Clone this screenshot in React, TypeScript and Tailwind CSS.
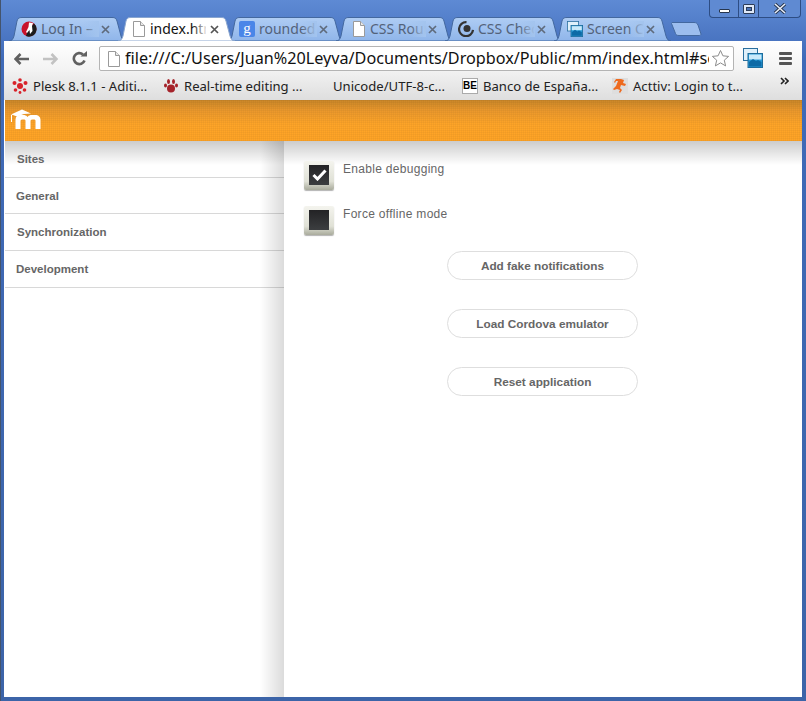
import type { ReactNode } from "react";

const PageIcon = () => (
  <svg width="14" height="16" viewBox="0 0 14 16" className="shrink-0">
    <path d="M1.500.5h7l4 4v11h-11z" fill="#fff" stroke="#9a9a9a" />
    <path d="M8.500.5v4h4" fill="#e8e8e8" stroke="#9a9a9a" />
  </svg>
);

const ArcherIcon = () => (
  <svg width="16" height="16" viewBox="0 0 16 16" className="shrink-0">
    <circle cx="8" cy="8" r="7.500" fill="#c8122c" />
    <path d="M13 2.500A7.500 7.500 0 0 1 5 15L7 9z" fill="#1d1d1d" />
    <path d="M8 1.500l4 .5-1 3 .5 5-2.500 3-.5-4-2.500 3-1-1 2.500-5z" fill="#fff" />
  </svg>
);

const GoogleIcon = () => (
  <div className="w-4 h-4 shrink-0 rounded-[2px] bg-[#4a86e8] flex items-center justify-center text-white text-[15px] leading-none pb-[2px] font-['Liberation_Serif',serif]">
    g
  </div>
);

const RingIcon = () => (
  <svg width="16" height="16" viewBox="0 0 16 16" className="shrink-0">
    <path d="M8.500 1.200A7 7 0 1 0 15 9" fill="none" stroke="#333" strokeWidth="2.200" />
    <circle cx="9" cy="7.500" r="3.500" fill="#333" />
  </svg>
);

const CaptureIcon = ({ size = 16 }: { size?: number }) => (
  <svg width={size} height={size} viewBox="0 0 20 20" className="shrink-0">
    <rect x=".5" y=".5" width="14" height="12" fill="#dff0fa" stroke="#2a6f9e" />
    <rect x="5" y="5.500" width="14.500" height="14" fill="#2a9ad6" stroke="#1c6c9c" />
    <rect x="6" y="6.500" width="12.500" height="5" fill="#c9e9f9" />
    <path d="M6 14l4-3 3 2 2-1 3.500 2v4.500H6z" fill="#0d6aa6" />
  </svg>
);

const tabs: { title: string; icon: ReactNode; active?: boolean; ml: string }[] = [
  { title: "Log In – Moodle", icon: <ArcherIcon />, ml: "pl-[12px]" },
  { title: "index.html", icon: <PageIcon />, active: true, ml: "pl-[14px]" },
  { title: "rounded", icon: <GoogleIcon />, ml: "pl-[12px]" },
  { title: "CSS Rounded", icon: <PageIcon />, ml: "pl-[16px]" },
  { title: "CSS Checkbox", icon: <RingIcon />, ml: "pl-[13px]" },
  { title: "Screen Capture", icon: <CaptureIcon />, ml: "pl-[13px]" },
];

const Tab = ({ title, icon, active, ml }: (typeof tabs)[number]) => (
  <div className={`relative w-[117px] h-[24px] -mr-[8px] shrink-0 ${active ? "z-10 text-[#111]" : "text-[#53627a]"}`}>
    <svg className="absolute inset-0" width="117" height="24" viewBox="0 0 117 24">
      <defs>
        <linearGradient id="tabIdle" x1="0" y1="0" x2="0" y2="1">
          <stop offset="0" stopColor="#afcdf4" />
          <stop offset="1" stopColor="#8fb5ea" />
        </linearGradient>
      </defs>
      <path
        d="M0 24C3 24 4 22 5 19L8 4C9 1 10 .5 13 .5H103C106 .5 107 1 108 4L112 19C113 22 114 24 117 24Z"
        fill={active ? "#fff" : "url(#tabIdle)"}
        stroke={active ? "#8aa6cf" : "#43689f"}
      />
    </svg>
    <div className={`relative h-full flex items-center gap-[4px] ${ml}`}>
      {icon}
      <span className="w-[56px] overflow-hidden whitespace-nowrap text-[14px] leading-none font-['Noto_Sans',sans-serif]">
        {title}
      </span>
      <span
        className={`absolute left-[74px] top-[4px] w-[16px] h-[16px] ${
          active
            ? "bg-[linear-gradient(to_right,rgba(255,255,255,0),#fff)]"
            : "bg-[linear-gradient(to_right,rgba(163,196,238,0),#a3c4ee)]"
        }`}
      />
      <svg className="absolute left-[92px] top-[8px]" width="9" height="9" viewBox="0 0 9 9">
        <path d="M1 1l7 7M8 1L1 8" stroke={active ? "#555" : "#5f6b7c"} strokeWidth="1.700" />
      </svg>
    </div>
  </div>
);

const bookmarks: { label: string; icon: ReactNode; width: string }[] = [
  {
    label: "Plesk 8.1.1 - Aditi...",
    width: "w-[151px]",
    icon: (
      <svg width="16" height="16" viewBox="0 0 16 16" className="shrink-0">
        <g fill="#d8232a">
          <circle cx="8" cy="8" r="3" />
          <circle cx="2.500" cy="5" r="2" />
          <circle cx="13.500" cy="5" r="2" />
          <circle cx="8" cy="2" r="1.800" />
          <circle cx="3.500" cy="12" r="1.800" />
          <circle cx="12.500" cy="12" r="1.800" />
          <circle cx="8" cy="14.500" r="1.400" />
        </g>
      </svg>
    ),
  },
  {
    label: "Real-time editing ...",
    width: "w-[170px]",
    icon: (
      <svg width="16" height="16" viewBox="0 0 16 16" className="shrink-0">
        <g fill="#a5232a">
          <ellipse cx="8" cy="10.500" rx="4" ry="4" />
          <ellipse cx="2.500" cy="7.500" rx="1.500" ry="2" />
          <ellipse cx="5.500" cy="3.500" rx="1.500" ry="2.500" />
          <ellipse cx="10.500" cy="3.500" rx="1.500" ry="2.500" />
          <ellipse cx="13.500" cy="7.500" rx="1.500" ry="2" />
        </g>
      </svg>
    ),
  },
  { label: "Unicode/UTF-8-c...", width: "w-[129px]", icon: null },
  {
    label: "Banco de España...",
    width: "w-[150px]",
    icon: (
      <div className="w-4 h-4 shrink-0 border border-[#aaa] bg-white text-[10px] leading-[14px] font-bold text-center text-black font-['Liberation_Sans',sans-serif]">
        BE
      </div>
    ),
  },
  {
    label: "Acttiv: Login to t...",
    width: "w-[150px]",
    icon: (
      <svg width="16" height="16" viewBox="0 0 16 16" className="shrink-0">
        <rect width="16" height="16" fill="#dedede" />
        <path d="M9 1l3 1-1 3 3 1-1 2-4-1-1 3 2 2-2 3-1-1 1-2-3-1-3 1-1-1 3-3 2-5-2 0-1 2-1-1 2-3z" fill="#ee6a1f" />
      </svg>
    ),
  },
];

const menuItems = [
  { label: "Sites", pad: "pl-[12px]", height: "h-[36px]" },
  { label: "General", pad: "pl-[11px] pt-[2px]", height: "h-[36px]" },
  { label: "Synchronization", pad: "pl-[12px] pt-[2px]", height: "h-[37px]" },
  { label: "Development", pad: "pl-[11px] pt-[2px]", height: "h-[37px]" },
];

const Checkbox = ({ label, checked }: { label: string; checked?: boolean }) => (
  <div className="flex h-[30px] items-start">
    <div className="w-[30px] h-[29px] rounded-[2px] bg-[linear-gradient(#f4f4ee,#e0e1d6_70%,#a9ab9c)] shadow-[0_1px_1px_rgba(0,0,0,0.3)] flex justify-center pt-[4px]">
      <div className="w-[20px] h-[20px] bg-[linear-gradient(#232325,#3c3e40)] flex items-center justify-center">
        {checked && (
          <svg width="15" height="12" viewBox="0 0 15 12">
            <path d="M1.500 6l4 4 8-8.500" fill="none" stroke="#fff" strokeWidth="3" />
          </svg>
        )}
      </div>
    </div>
    <span className="ml-[9px] -mt-[1px] text-[12px] leading-[18px] tracking-[0.3px] text-[#666]">{label}</span>
  </div>
);

const PillButton = ({ label }: { label: string }) => (
  <button className="w-[191px] h-[29px] pt-[2px] rounded-full border border-[#dedede] bg-white text-[11.8px] font-bold text-[#666]">
    {label}
  </button>
);

export default function App() {
  return (
    <div className="w-[806px] h-[701px] overflow-hidden relative flex flex-col bg-[linear-gradient(#5e8ad4,#3f6ab8_60px,#3c64a8)] font-['Liberation_Sans',sans-serif] border-l border-[#44546c]">
      {/* window buttons */}
      <div className="absolute left-[708px] top-0 w-[92px] h-[18px] flex rounded-b-[4px] border border-t-0 border-[#2d4d84] bg-[#5f8ad2] z-20">
        <div className="w-[29px] flex items-center justify-center border-r border-[#2d4d84]">
          <div className="w-[11px] h-[4px] mt-[4px] border border-[#27364e] bg-white rounded-[1px]" />
        </div>
        <div className="w-[20px] flex items-center justify-center border-r border-[#2d4d84]">
          <div className="w-[12px] h-[10px] border border-[#2c3c58] bg-[#dfe9f8] rounded-[1px] flex items-center justify-center">
            <div className="w-[6px] h-[4px] bg-[#4a73b8] border border-[#2c3c58]" />
          </div>
        </div>
        <div className="flex-1 flex items-center justify-center">
          <svg width="14" height="11" viewBox="0 0 14 11">
            <path d="M2 1l10 9M12 1L2 10" stroke="#27364e" strokeWidth="3.400" />
            <path d="M2 1l10 9M12 1L2 10" stroke="#e8eefa" strokeWidth="1.600" />
          </svg>
        </div>
      </div>

      {/* tab strip */}
      <div className="h-[41px] shrink-0 pt-[17px] pl-[8px] flex items-start">
        {tabs.map((t) => (
          <Tab key={t.title} {...t} />
        ))}
        <svg className="ml-[8px] mt-[5px] shrink-0" width="32" height="14" viewBox="0 0 32 14">
          <path d="M1 .5H23C25 .5 26 1 27 3L30 12C30 13 29 13.500 28 13.500H8C6 13.500 5 13 4.500 11.500L.5 1.500Z" fill="#9cbdee" stroke="#43689f" />
        </svg>
      </div>

      <div className="flex-1 ml-[3px] mr-[4px] mb-[4px] min-h-0 flex flex-col bg-white">
        {/* address bar */}
        <div className="h-[31px] shrink-0 flex items-start bg-[linear-gradient(#ffffff,#f2f2f2)]">
          <div className="w-[95px] h-full shrink-0 flex items-center pl-[10px] pt-[4px] gap-[14px]">
            <svg width="15" height="12" viewBox="0 0 15 12">
              <path d="M6.500 1L1.500 6l5 5M2 6h13" fill="none" stroke="#606060" strokeWidth="2.600" />
            </svg>
            <svg width="15" height="12" viewBox="0 0 15 12">
              <path d="M8.500 1l5 5-5 5M13 6H0" fill="none" stroke="#c2c2c2" strokeWidth="2.600" />
            </svg>
            <svg width="15" height="15" viewBox="0 0 15 15">
              <path d="M12.500 9.500A5.500 5.500 0 1 1 11 3.500" fill="none" stroke="#606060" strokeWidth="2.600" />
              <path d="M8.500 5.500H15V0z" fill="#606060" />
            </svg>
          </div>
          <div className="relative mt-[5px] w-[635px] h-[25px] shrink-0 rounded-[2px] border border-[#b4b4b4] bg-white flex items-center pl-[7px] gap-[4px] overflow-hidden">
            <PageIcon />
            <span className="w-[584px] overflow-hidden whitespace-nowrap text-[16.2px] leading-none text-[#111] font-['Noto_Sans',sans-serif]">
              file:///C:/Users/Juan%20Leyva/Documents/Dropbox/Public/mm/index.html#settings
            </span>
            <svg className="absolute right-[3px] top-[2px]" width="19" height="19" viewBox="0 0 19 19">
              <path d="M9.500 1.500l2.400 5.300 5.700.6-4.300 3.800 1.300 5.700-5.100-3-5.100 3 1.300-5.700L1.400 7.400l5.700-.6z" fill="#fff" stroke="#8c8c8c" />
            </svg>
          </div>
          <div className="ml-[9px] mt-[7px] shrink-0">
            <CaptureIcon size={20} />
          </div>
          <div className="ml-[16px] mt-[11px] w-[13px] shrink-0 flex flex-col gap-[2px]">
            <div className="h-[3px] rounded-[1px] bg-[#555]" />
            <div className="h-[3px] rounded-[1px] bg-[#555]" />
            <div className="h-[3px] rounded-[1px] bg-[#555]" />
          </div>
        </div>

        {/* bookmarks */}
        <div className="h-[28px] shrink-0 relative flex items-center pl-[8px] pt-[1px] bg-[linear-gradient(#f1f1f1,#dedede)] text-[13.1px] text-[#222] font-['Noto_Sans',sans-serif]">
          {bookmarks.map((b) => (
            <div key={b.label} className={`${b.width} shrink-0 flex items-center gap-[5px] whitespace-nowrap`}>
              {b.icon}
              <span>{b.label}</span>
            </div>
          ))}
          <svg className="absolute left-[776px] top-[5px]" width="9" height="8" viewBox="0 0 9 8">
            <path d="M1 1l3 3-3 3M5 1l3 3-3 3" fill="none" stroke="#222" strokeWidth="1.600" />
          </svg>
        </div>

        {/* orange header */}
        <div className="relative z-10 ml-[1px] h-[41px] shrink-0 flex items-center pl-[5px] bg-[repeating-linear-gradient(90deg,rgba(0,0,0,0.03)_0,rgba(0,0,0,0.03)_1px,transparent_1px,transparent_2px),repeating-linear-gradient(0deg,rgba(0,0,0,0.03)_0,rgba(0,0,0,0.03)_1px,transparent_1px,transparent_2px),linear-gradient(#c98628,#ea982c_25%,#ffa528_60%,#ffa426)]">
          <svg width="32" height="24" viewBox="0 0 32 24" className="-mt-[1px]">
            <path d="M1 6.500L12 1.500L21 5.500L14 6L7 8.500L3 7z" fill="#fff" />
            <path d="M1.500 7V14" stroke="#fff" strokeWidth="1" />
            <path
              d="M5.500 21V11.500C5.500 8.500 7.500 7 10.500 7H13C15 7 16.500 7.500 17.500 9C18.500 7.500 20 7 22 7H25C28.500 7 30.500 9 30.500 12V21H25.500V13C25.500 12 25 11.500 24 11.500H22.500C21.500 11.500 20.500 12 20.500 13V21H15.500V13C15.500 12 15 11.500 14 11.500H12.500C11.500 11.500 10.500 12 10.500 13V21Z"
              fill="#fff"
            />
          </svg>
        </div>

        {/* page */}
        <div className="relative flex-1 min-h-0 flex ml-[1px]">
          <div className="absolute inset-x-0 top-0 h-[24px] bg-[linear-gradient(rgba(0,0,0,0.2),rgba(0,0,0,0))] pointer-events-none" />
          <div className="relative w-[279px] shrink-0 pt-[1px] text-[11.5px] font-bold text-[#666]">
            {menuItems.map((m) => (
              <div key={m.label} className={`${m.height} ${m.pad} flex items-center border-b border-[#d8d8d8]`}>
                {m.label}
              </div>
            ))}
            <div className="absolute inset-y-0 right-0 w-[24px] bg-[linear-gradient(to_right,rgba(0,0,0,0),rgba(0,0,0,0.14))] pointer-events-none" />
          </div>
          <div className="relative flex-1 pl-[20px] pt-[20px]">
            <div className="flex flex-col gap-[15px]">
              <Checkbox label="Enable debugging" checked />
              <Checkbox label="Force offline mode" />
            </div>
            <div className="ml-[143px] mt-[15px] flex flex-col gap-[29px]">
              <PillButton label="Add fake notifications" />
              <PillButton label="Load Cordova emulator" />
              <PillButton label="Reset application" />
            </div>
          </div>
        </div>
      </div>
    </div>
  );
}
